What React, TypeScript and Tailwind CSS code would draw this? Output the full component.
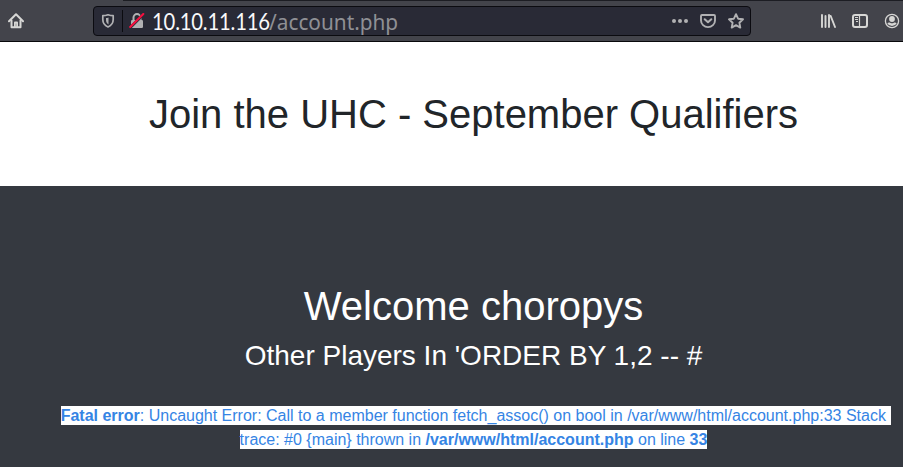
import React from "react";

function HomeIcon() {
  return (
    <svg width="16" height="16" viewBox="0 0 16 16" fill="none" stroke="#d7d7d5" strokeWidth="2" strokeLinecap="round" strokeLinejoin="round">
      <path d="M1 8.2 8 1.2l7 7" />
      <path d="M3.500 7.500v6.800h9V7.500" />
      <path d="M6.900 14V9.500h2.200V14" strokeWidth="1.800" />
    </svg>
  );
}

function ShieldIcon() {
  return (
    <svg width="14" height="16" viewBox="0 0 14 16" fill="none" stroke="#b1b1b3" strokeWidth="1.700" strokeLinejoin="round">
      <path d="M7 1.800c1.800.6 3.300.9 5.200.9v3.900c0 3.500-1.900 6-5.200 7.400-3.300-1.400-5.200-3.900-5.200-7.400V2.700c1.900 0 3.400-.3 5.200-.9Z" />
      <path d="M7.500 4.400v7C5.700 10.500 5 8.900 5 6.800V5c.9-.1 1.700-.3 2.500-.6Z" fill="#b1b1b3" stroke="none" />
    </svg>
  );
}

function InsecureLockIcon() {
  return (
    <svg width="16" height="16" viewBox="0 0 16 16" fill="none">
      <path d="M4.500 8V4.600a3.500 3.500 0 0 1 7 0V8" stroke="#b1b1b3" strokeWidth="2" />
      <rect x="2" y="7" width="12" height="8" rx="1.200" fill="#b1b1b3" />
      <path d="M1 14.800 14.500 1.300" stroke="#292a36" strokeWidth="3" />
      <path d="M1.200 14 14.300 1" stroke="#f5103f" strokeWidth="2.100" strokeLinecap="round" />
    </svg>
  );
}

function PocketIcon() {
  return (
    <svg width="16" height="16" viewBox="0 0 16 16" fill="none" stroke="#b1b1b3" strokeWidth="1.900" strokeLinecap="round" strokeLinejoin="round">
      <path d="M2 2h12a1 1 0 0 1 1 1v4.500a7 6.600 0 0 1-14 0V3a1 1 0 0 1 1-1Z" />
      <path d="m4.700 6.200 3.300 3.100 3.300-3.100" strokeWidth="2" />
    </svg>
  );
}

function StarIcon() {
  return (
    <svg width="16" height="16" viewBox="0 0 16 16" fill="none" stroke="#b1b1b3" strokeWidth="1.900" strokeLinejoin="round">
      <path d="m8 1.200 2.100 4.500 4.900.6-3.600 3.400.9 4.900L8 12.200l-4.300 2.400.9-4.900L1 6.300l4.900-.6Z" />
    </svg>
  );
}

function LibraryIcon() {
  return (
    <svg width="16" height="16" viewBox="0 0 16 16" fill="none" stroke="#d7d7d5" strokeWidth="1.900" strokeLinecap="round">
      <path d="M2 2v12M5.500 3v11M9 2v12" />
      <path d="m10.700 3 4.300 11" />
    </svg>
  );
}

function SidebarIcon() {
  return (
    <svg width="16" height="16" viewBox="0 0 16 16" fill="none" stroke="#d7d7d5">
      <rect x="1" y="2" width="14" height="12" rx="2" strokeWidth="2" />
      <path d="M7.500 2.500v11" strokeWidth="1.200" />
      <path d="M3 4.500h3M3 6.500h3M4 8.500h2" strokeWidth="1" />
    </svg>
  );
}

function AccountIcon() {
  return (
    <svg width="16" height="16" viewBox="0 0 16 16" fill="none">
      <circle cx="8" cy="8" r="6.600" stroke="#d7d7d5" strokeWidth="1.300" />
      <circle cx="8" cy="6" r="2.900" fill="#d7d7d5" />
      <path d="M3.300 10.200c1-.8 2-.9 2.800-.4a3.800 3.800 0 0 0 3.800 0c.8-.5 1.800-.4 2.800.4a5.300 5.300 0 0 1-9.400 0Z" fill="#d7d7d5" />
    </svg>
  );
}

function Toolbar() {
  return (
    <header className="h-[42px] border-b border-[#08080b] bg-[#43444b]">
      <div className="ml-[123px] h-px bg-[#1c1d23]" />
      <div className="flex h-10 items-center pl-2">
        <HomeIcon />
        <div className="ml-[69px] flex h-[30px] w-[658px] items-center rounded-[4px] border border-[#0b0b10] bg-[#292a36] pl-[7px] pr-[6px]">
          <ShieldIcon />
          <span className="ml-[7px] h-[22px] w-px bg-[#0b0b10]" />
          <span className="ml-[6px]"><InsecureLockIcon /></span>
          <div className="ml-[7px] flex whitespace-pre text-[22px] leading-[28px]">
            <span className="w-[117px] origin-left scale-x-[0.9] pt-px font-['Lato',sans-serif] text-[22.500px] tracking-[-0.2px] text-[#f9f9fa]">10.10.11.116</span>
            <span className="origin-left scale-x-[0.945] font-['Noto_Sans',sans-serif] text-[#8f9095]">/account.php</span>
          </div>
          <div className="ml-auto flex items-center gap-3">
            <svg width="16" height="16" viewBox="0 0 16 16" fill="#b1b1b3">
              <circle cx="2" cy="8" r="2" />
              <circle cx="8" cy="8" r="2" />
              <circle cx="14" cy="8" r="2" />
            </svg>
            <PocketIcon />
            <StarIcon />
          </div>
        </div>
        <div className="ml-[69px] flex gap-4">
          <LibraryIcon />
          <SidebarIcon />
          <AccountIcon />
        </div>
      </div>
    </header>
  );
}

export default function App() {
  return (
    <div className="flex h-[467px] w-[903px] flex-col overflow-hidden bg-white font-['Liberation_Sans',Arial,sans-serif]">
      <Toolbar />
      <section className="flex h-[144px] w-[947px] items-center justify-center text-[#212529]">
        <h1 className="text-[40px] leading-[48px]">Join the UHC - September Qualifiers</h1>
      </section>
      <main className="w-[947px] flex-1 bg-[#353940] pt-24 text-center text-white">
        <h1 className="text-[40px] leading-[48px]">Welcome choropys</h1>
        <h3 className="mt-[9px] text-[28px] leading-[34px]">Other Players In 'ORDER BY 1,2 -- #</h3>
        <p className="mt-[31px] whitespace-pre text-base text-[#3584e4]">
          <span className="-mr-[5px] bg-white py-px pr-px"><b>Fatal error</b>: Uncaught Error: Call to a member function fetch_assoc() on bool in /var/www/html/account.php:33 Stack </span>
          <br />
          <span className="bg-white py-px">trace: #0 {"{main}"} thrown in <b>/var/www/html/account.php</b> on line <b>33</b></span>
        </p>
      </main>
    </div>
  );
}
